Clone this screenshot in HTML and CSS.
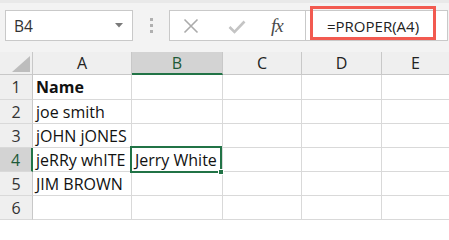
FILE: index.html
```html
<!DOCTYPE html>
<html>
<head>
<meta charset="utf-8">
<link rel="stylesheet" href="styles.css">
</head>
<body>
<div class="toolbar">
  <div class="namebox">
    <span class="nb-text">B4</span>
    <svg class="nb-arrow" width="8" height="5" viewBox="0 0 8 5"><polygon points="0,0 8,0 4,4.5" fill="#7a7a7a"/></svg>
  </div>
  <div class="grip"><span></span><span></span><span></span></div>
  <div class="fbuttons">
    <svg class="ico-x" width="16" height="16" viewBox="0 0 16 16"><path d="M1.5 1.5 L14.5 14.5 M14.5 1.5 L1.5 14.5" stroke="#ababab" stroke-width="1.6" fill="none"/></svg>
    <svg class="ico-check" width="18" height="14" viewBox="0 0 18 14"><path d="M1.5 7 L6.5 12 L16.5 1.5" stroke="#c4c4c4" stroke-width="2.6" fill="none"/></svg>
    <span class="fx">fx</span>
  </div>
  <div class="formula">
    <span class="ftext">=PROPER(A4)</span>
    <div class="annot"></div>
  </div>
</div>
<div class="sheet">
  <div class="corner"><svg width="18" height="16" viewBox="0 0 18 16"><polygon points="18,0 18,16 0,16" fill="#bdbdbd"/></svg></div>
  <div class="ch">A</div>
  <div class="ch sel">B</div>
  <div class="ch">C</div>
  <div class="ch">D</div>
  <div class="ch last">E</div>

  <div class="rh">1</div>
  <div class="c bold">Name</div><div class="c"></div><div class="c"></div><div class="c"></div><div class="c last"></div>

  <div class="rh">2</div>
  <div class="c">joe smith</div><div class="c"></div><div class="c"></div><div class="c"></div><div class="c last"></div>

  <div class="rh">3</div>
  <div class="c">jOHN jONES</div><div class="c"></div><div class="c"></div><div class="c"></div><div class="c last"></div>

  <div class="rh sel">4</div>
  <div class="c">jeRRy whITE</div><div class="c active">Jerry White<span class="handle"></span></div><div class="c"></div><div class="c"></div><div class="c last"></div>

  <div class="rh">5</div>
  <div class="c">JIM BROWN</div><div class="c"></div><div class="c"></div><div class="c"></div><div class="c last"></div>

  <div class="rh">6</div>
  <div class="c"></div><div class="c"></div><div class="c"></div><div class="c"></div><div class="c last"></div>
</div>
</body>
</html>
```
FILE: styles.css
```css
* { box-sizing: border-box; }
html, body { margin: 0; padding: 0; }
body {
  width: 449px;
  height: 220px;
  overflow: hidden;
  background: #ffffff;
  font-family: "Open Sans", "Liberation Sans", sans-serif;
  color: #222;
}
.toolbar {
  height: 52px;
  background: #f3f3f3;
  border-top: 3px solid #e9e9e9;
  display: flex;
  align-items: flex-start;
  padding-top: 7px;
  position: relative;
}
.namebox {
  margin-left: 5px;
  width: 128px;
  height: 31px;
  background: #fff;
  border: 1px solid #c9c9c9;
  display: flex;
  align-items: center;
  padding-left: 8px;
  padding-right: 9px;
}
.nb-text { font-size: 15.5px; color: #333; flex: 1; }
.nb-arrow { display: block; }
.grip {
  width: 36px;
  height: 31px;
  display: flex;
  flex-direction: column;
  align-items: center;
  justify-content: center;
  gap: 3px;
}
.grip span { width: 3px; height: 3px; background: #b0b0b0; display: block; }
.fbuttons {
  width: 137px;
  height: 31px;
  background: #fff;
  border: 1px solid #c9c9c9;
  display: flex;
  align-items: center;
  padding-left: 13px;
}
.ico-x { display: block; margin-right: 29px; }
.ico-check { display: block; margin-right: 25px; margin-top: 2px; }
.fx {
  font-family: "Liberation Serif", "DejaVu Serif", serif;
  font-style: italic;
  font-size: 19px;
  color: #4a4a4a;
  letter-spacing: -1px;
}
.formula {
  width: 143px;
  height: 31px;
  margin-left: -1px;
  background: #fff;
  border: 1px solid #c9c9c9;
  display: flex;
  align-items: center;
  padding-left: 21px;
  position: relative;
}
.ftext { font-size: 15px; color: #222; }
.annot {
  position: absolute;
  left: 4px;
  top: -5px;
  width: 126px;
  height: 34px;
  border: 3px solid #f25a50;
}
.sheet {
  display: grid;
  grid-template-columns: 33px 99px 91px 79px 80px 67px;
  grid-template-rows: 23px 25px 24px 24px 24px 24px 24px;
}
.corner {
  background: #efefef;
  border-right: 1px solid #c8c8c8;
  border-bottom: 1px solid #c8c8c8;
  display: flex;
  align-items: flex-end;
  justify-content: flex-end;
  padding: 0 2px 2px 0;
}
.corner svg { display: block; }
.ch {
  background: #efefef;
  border-right: 1px solid #c8c8c8;
  border-bottom: 1px solid #c8c8c8;
  display: flex;
  align-items: center;
  justify-content: center;
  font-size: 16px;
  color: #222;
}
.ch.sel {
  background: #d3d3d3;
  border-bottom: 2px solid #217346;
  color: #1d5a38;
}
.ch.last { border-right: none; }
.rh {
  background: #efefef;
  border-right: 1px solid #c8c8c8;
  border-bottom: 1px solid #d9d9d9;
  display: flex;
  align-items: center;
  justify-content: center;
  font-size: 16px;
  color: #333;
}
.rh.sel {
  background: #d3d3d3;
  border-right: 2px solid #217346;
  color: #1d5a38;
}
.c {
  border-right: 1px solid #d9d9d9;
  border-bottom: 1px solid #d9d9d9;
  font-size: 16px;
  color: #111;
  padding-left: 3px;
  display: flex;
  align-items: center;
  white-space: nowrap;
}
.c.last { border-right: none; }
.c.bold { font-weight: bold; }
.c.active { position: relative; }
.c.active::after {
  content: "";
  position: absolute;
  left: -2px;
  top: -2px;
  right: 0;
  bottom: -2px;
  border: 2px solid #217346;
}
.handle {
  position: absolute;
  right: -2px;
  bottom: -4px;
  width: 6px;
  height: 6px;
  background: #217346;
  border: 1px solid #fff;
  z-index: 2;
}
```
